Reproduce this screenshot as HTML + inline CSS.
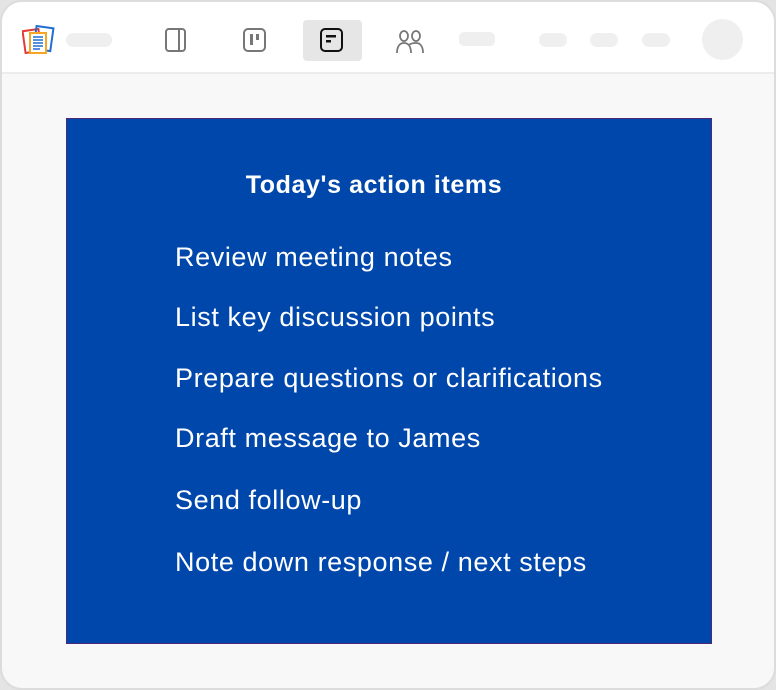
<!DOCTYPE html>
<html><head><style>
*{margin:0;padding:0;box-sizing:border-box}
body{width:776px;height:690px;background:#e4e4e4;font-family:"Liberation Sans",sans-serif;overflow:hidden}
.frame{position:absolute;left:0;top:0;width:776px;height:690px;border:2px solid #dcdcdc;border-radius:22px;background:#f8f8f8;overflow:hidden}
.hdr{position:absolute;left:-2px;top:-2px;width:776px;height:74px;background:#fff;border-bottom:2px solid #ececec}
.pill{position:absolute;background:#efefef;border-radius:8px}
.box{position:absolute;left:64px;top:116px;width:646px;height:526px;background:#0047ab;border:1px solid #4a2a78}
.t{position:absolute;left:0;width:614px;text-align:center;top:52px;color:#fff;font-weight:bold;font-size:25px;letter-spacing:0.6px}
.i{position:absolute;left:108px;color:#fff;font-size:27px;letter-spacing:0.6px;white-space:nowrap}
</style></head><body>
<div class="frame">
<div class="hdr">
<svg style="position:absolute;left:22px;top:24px" width="40" height="34" viewBox="0 0 40 34">
<rect x="2" y="6" width="16" height="22" fill="none" stroke="#e53935" stroke-width="2" transform="rotate(-8 10 17)"/>
<rect x="13" y="3" width="17" height="23" fill="none" stroke="#1e6fd0" stroke-width="2" transform="rotate(8 21 14)"/>
<rect x="8" y="9" width="16" height="20" fill="#fff" stroke="#f5a623" stroke-width="2"/>
<g stroke="#1e6fd0" stroke-width="1.5"><line x1="11" y1="13" x2="21" y2="13"/><line x1="11" y1="16" x2="21" y2="16"/><line x1="11" y1="19" x2="21" y2="19"/><line x1="11" y1="22" x2="21" y2="22"/><line x1="11" y1="25" x2="18" y2="25"/></g>
</svg>
<div class="pill" style="left:66px;top:33px;width:46px;height:14px"></div>
<svg style="position:absolute;left:164px;top:27px" width="24" height="26"><rect x="2" y="2" width="19" height="22" rx="3" fill="none" stroke="#777" stroke-width="2"/><line x1="15" y1="2" x2="15" y2="24" stroke="#777" stroke-width="2"/></svg>
<svg style="position:absolute;left:242px;top:27px" width="26" height="26"><rect x="2" y="2" width="21" height="22" rx="4" fill="none" stroke="#777" stroke-width="2"/><rect x="8" y="7" width="3" height="11" fill="#777"/><rect x="14" y="7" width="3" height="6" fill="#777"/></svg>
<div style="position:absolute;left:303px;top:20px;width:59px;height:41px;background:#e6e6e6;border-radius:4px"></div>
<svg style="position:absolute;left:319px;top:27px" width="26" height="26"><rect x="2" y="2" width="21" height="22" rx="4" fill="none" stroke="#111" stroke-width="2"/><rect x="7" y="8" width="10" height="2.5" fill="#111"/><rect x="7" y="13" width="5" height="2.5" fill="#111"/></svg>
<svg style="position:absolute;left:395px;top:29px" width="32" height="25" fill="none" stroke="#777" stroke-width="1.8"><ellipse cx="9" cy="7" rx="4" ry="5"/><ellipse cx="21" cy="7" rx="4" ry="5"/><path d="M2 24c0-7 3-10 7-10s7 3 7 10"/><path d="M14 16c1.5-1.5 4-2 7-2 4 0 7 3 7 10"/></svg>
<div class="pill" style="left:459px;top:32px;width:36px;height:14px;border-radius:5px"></div>
<div class="pill" style="left:539px;top:33px;width:28px;height:14px"></div>
<div class="pill" style="left:590px;top:33px;width:28px;height:14px"></div>
<div class="pill" style="left:642px;top:33px;width:28px;height:14px"></div>
<div class="pill" style="left:702px;top:19px;width:41px;height:41px;border-radius:50%"></div>
</div>
<div class="box">
<div class="t">Today's action items</div>
<div class="i" style="top:123px">Review meeting notes</div>
<div class="i" style="top:183px">List key discussion points</div>
<div class="i" style="top:244px">Prepare questions or clarifications</div>
<div class="i" style="top:304px">Draft message to James</div>
<div class="i" style="top:366px">Send follow-up</div>
<div class="i" style="top:428px">Note down response / next steps</div>
</div>
</div>
</body></html>
